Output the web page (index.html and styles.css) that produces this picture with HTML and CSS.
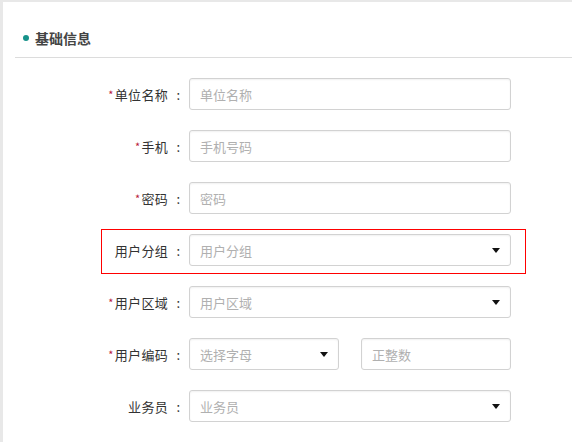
FILE: index.html
```html
<!DOCTYPE html>
<html lang="zh">
<head>
<meta charset="utf-8">
<link rel="stylesheet" href="styles.css">
</head>
<body>
<div class="panel">
  <div class="panel-head"><span class="dot"></span><span class="title">基础信息</span></div>
  <form class="form">
    <div class="row">
      <label class="label"><span class="req">*</span>单位名称<span class="colon">:</span></label>
      <div class="field"><input class="input" placeholder="单位名称"></div>
    </div>
    <div class="row">
      <label class="label"><span class="req">*</span>手机<span class="colon">:</span></label>
      <div class="field"><input class="input" placeholder="手机号码"></div>
    </div>
    <div class="row">
      <label class="label"><span class="req">*</span>密码<span class="colon">:</span></label>
      <div class="field"><input class="input" placeholder="密码"></div>
    </div>
    <div class="row">
      <div class="mark"></div>
      <label class="label">用户分组<span class="colon">:</span></label>
      <div class="field"><div class="select"><span class="ph">用户分组</span><span class="caret"></span></div></div>
    </div>
    <div class="row">
      <label class="label"><span class="req">*</span>用户区域<span class="colon">:</span></label>
      <div class="field"><div class="select"><span class="ph">用户区域</span><span class="caret"></span></div></div>
    </div>
    <div class="row">
      <label class="label"><span class="req">*</span>用户编码<span class="colon">:</span></label>
      <div class="field split">
        <div class="select"><span class="ph">选择字母</span><span class="caret"></span></div>
        <input class="input" placeholder="正整数">
      </div>
    </div>
    <div class="row">
      <label class="label">业务员<span class="colon">:</span></label>
      <div class="field"><div class="select"><span class="ph">业务员</span><span class="caret"></span></div></div>
    </div>
  </form>
</div>
</body>
</html>
```
FILE: styles.css
```css
* { box-sizing: border-box; }
html, body { margin: 0; padding: 0; }
body {
  background: #e8e8e8;
  font-family: "Noto Sans CJK SC", "Noto Sans", sans-serif;
  font-size: 13px;
  color: #333;
  height: 442px;
  overflow: hidden;
}
.panel {
  margin: 2px 0 0 3px;
  background: #fff;
  height: 440px;
}
.panel-head {
  margin-left: 12px;
  height: 56px;
  border-bottom: 1px solid #dcdcdc;
  display: flex;
  align-items: center;
  padding: 16px 0 0 8px;
}
.dot {
  width: 6px;
  height: 6px;
  border-radius: 50%;
  background: #16928a;
  margin-right: 6px;
}
.title {
  font-size: 14px;
  font-weight: bold;
  color: #444;
}
.form {
  padding-top: 20px;
  display: flex;
  flex-direction: column;
  gap: 20px;
}
.row {
  display: flex;
  align-items: center;
  height: 32px;
  position: relative;
}
.label {
  width: 185px;
  text-align: right;
  color: #333;
  font-size: 13px;
  letter-spacing: 0.3px;
}
.colon {
  display: inline-block;
  width: 20px;
  text-align: center;
  padding-left: 1px;
}
.req {
  color: #b8203a;
  font-size: 11px;
  margin-right: 1px;
  position: relative;
  top: -1px;
}
.field {
  width: 322px;
  height: 32px;
  display: flex;
  margin-left: 1px;
}
.split { justify-content: space-between; }
.input, .select {
  height: 32px;
  border: 1px solid #d2d2d2;
  border-radius: 3px;
  box-shadow: inset 0 1px 2px rgba(0,0,0,0.06);
  background: #fff;
  padding: 0 10px;
  font-family: inherit;
  font-size: 13px;
  color: #333;
  outline: none;
}
.input { width: 100%; }
.input::placeholder { color: #b0b0b0; }
.select {
  width: 100%;
  display: flex;
  align-items: center;
  justify-content: space-between;
}
.split .select, .split .input { width: 150px; flex: none; }
.ph { color: #b0b0b0; }
.caret {
  width: 0;
  height: 0;
  border-left: 4px solid transparent;
  border-right: 4px solid transparent;
  border-top: 5px solid #111;
}
.mark {
  position: absolute;
  left: 98px;
  top: -5px;
  width: 425px;
  height: 45px;
  box-shadow: inset 0 0 0 1px #f00;
  background: transparent;
  pointer-events: none;
}
```
